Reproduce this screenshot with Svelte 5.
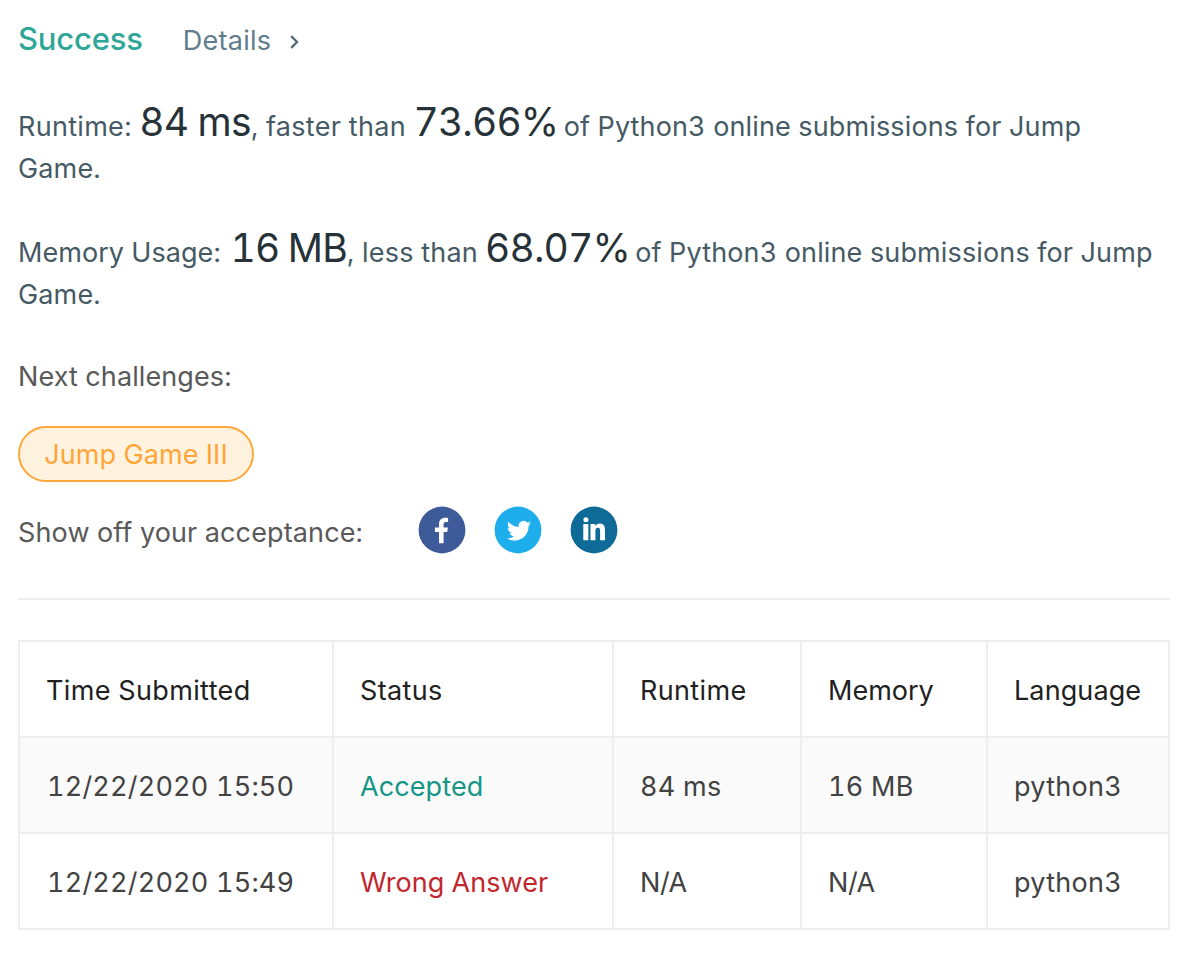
<script>
  const columns = ['Time Submitted', 'Status', 'Runtime', 'Memory', 'Language'];
  const submissions = [
    { time: '12/22/2020 15:50', status: 'Accepted', ok: true, runtime: '84 ms', memory: '16 MB', language: 'python3' },
    { time: '12/22/2020 15:49', status: 'Wrong Answer', ok: false, runtime: 'N/A', memory: 'N/A', language: 'python3' }
  ];
</script>

<main>
  <header>
    <span class="success">Success</span>
    <a class="details">
      <span>Details</span>
      <svg width="12" height="16" viewBox="0 0 12 16"><path d="M2.200 2.200 8 8l-5.800 5.800" /></svg>
    </a>
  </header>

  <p class="metric">
    <span class="label-run">Runtime:{' '}</span><span class="big ms">84 ms</span><span class="mid">, faster than{' '}</span><span class="big pct">73.66%</span><span class="tail">{' '}of Python3 online submissions for Jump Game.</span>
  </p>
  <p class="metric">
    <span class="label-mem">Memory Usage:{' '}</span><span class="big mb">16 MB</span><span class="mid-mem">, less than{' '}</span><span class="big pct-mem">68.07%</span><span class="tail">{' '}of Python3 online submissions for Jump Game.</span>
  </p>

  <div class="next">Next challenges:</div>
  <a class="pill"><span>Jump Game III</span></a>

  <div class="share">
    <span class="share-label">Show off your acceptance:</span>
    <div class="icons">
      <svg viewBox="0 0 48 48">
        <circle cx="24" cy="24" r="23.400" fill="#3d5b98" />
        <path fill="#fff" d="M21 37.200V26h-4.100v-4.500H21v-3.200c0-4.300 2.400-6.500 6.300-6.500 1.300 0 2.200.1 2.800.2v4.100h-2.200c-1.800 0-2.300.9-2.300 2.300v3.100h4.300l-.6 4.500h-3.700v11.200z" />
      </svg>
      <svg viewBox="0 0 48 48">
        <circle cx="24" cy="24" r="23.400" fill="#1eaeec" />
        <g transform="translate(12.800 12.600) scale(1.010)">
          <path fill="#fff" d="M23.950 4.570a10 10 0 0 1-2.820.77 4.960 4.960 0 0 0 2.160-2.720c-.95.56-2 .96-3.130 1.190a4.920 4.920 0 0 0-8.380 4.480C7.690 8.100 4.070 6.130 1.640 3.160a4.920 4.920 0 0 0 1.520 6.570 4.900 4.900 0 0 1-2.230-.61v.06c0 2.390 1.700 4.380 3.950 4.830a5 5 0 0 1-2.210.08 4.940 4.940 0 0 0 4.600 3.420A9.870 9.870 0 0 1 0 19.540a13.990 13.990 0 0 0 7.550 2.210c9.050 0 14-7.500 14-13.980 0-.21 0-.42-.02-.63a9.940 9.940 0 0 0 2.420-2.570z" />
        </g>
      </svg>
      <svg viewBox="0 0 48 48">
        <circle cx="24" cy="24" r="23.400" fill="#0e6b98" />
        <g fill="#fff">
          <circle cx="15.900" cy="13.700" r="2.500" />
          <path d="M13.300 18h5V34.300h-5zM20.500 18h4.700v2.200c.9-1.600 2.600-2.600 4.600-2.600 4.300 0 5.200 2.900 5.200 6.900v9.800h-4.900v-8.700c0-2.200-.2-3.900-2.100-3.900-2.100 0-2.600 1.600-2.600 3.900v8.700h-4.900z" />
        </g>
      </svg>
    </div>
  </div>

  <hr />

  <table>
    <colgroup><col class="c1" /><col class="c2" /><col class="c3" /><col class="c4" /><col class="c5" /></colgroup>
    <thead>
      <tr>{#each columns as c}<th>{c}</th>{/each}</tr>
    </thead>
    <tbody>
      {#each submissions as s}
        <tr>
          <td class="time">{s.time}</td>
          <td class={s.ok ? 'accepted' : 'wrong'}>{s.status}</td>
          <td class:empty={s.runtime === 'N/A'}>{s.runtime}</td>
          <td class:empty={s.memory === 'N/A'}>{s.memory}</td>
          <td class="lang">{s.language}</td>
        </tr>
      {/each}
    </tbody>
  </table>
</main>

<style>
  :global(body) { background: #fff; }
  main {
    box-sizing: border-box;
    height: 956px;
    padding: 18px 18px 0;
    overflow: hidden;
    font: 400 27px/42px Inter, "Liberation Sans", sans-serif;
    font-variant-numeric: tabular-nums;
    color: #595959;
  }
  header { display: flex; align-items: baseline; height: 42px; margin-bottom: 46px; }
  .success { font-size: 31px; font-weight: 500; letter-spacing: -0.200px; color: #2fa698; }
  .details { display: flex; align-items: center; margin-left: 40.200px; letter-spacing: 0.250px; color: #607d8b; }
  .details svg { margin: 2px 0 0 17.800px; fill: none; stroke: #546e7a; stroke-width: 2.400; }
  .metric { margin: 0 0 42px; padding-right: 8px; height: 84px; color: #455a64; }
  .label-run { letter-spacing: 0.300px; }
  .label-mem { letter-spacing: 0.050px; }
  .mid { letter-spacing: 0.300px; }
  .mid-mem { letter-spacing: 0.230px; }
  .tail { letter-spacing: 0.140px; margin-left: -2px; }
  .big { font-size: 39px; line-height: 0; color: #263238; }
  .ms { letter-spacing: -0.700px; word-spacing: -0.700px; }
  .mb { margin-left: 2.500px; letter-spacing: -0.750px; word-spacing: -1.500px; }
  .pct { letter-spacing: -0.850px; }
  .pct-mem { margin-left: -0.500px; letter-spacing: -0.850px; }
  .next { margin-top: -2px; letter-spacing: 0.100px; }
  .pill {
    display: flex; align-items: center; justify-content: center;
    box-sizing: border-box; width: 236px; height: 56px; margin: 28px 0 24px; padding-top: 2px;
    border: 2px solid #ffa73a; border-radius: 28px; letter-spacing: 0.080px;
    background: #fff3e0; color: #ffa538;
  }
  .share { display: flex; height: 48px; }
  .share-label { width: 400px; padding-top: 6px; letter-spacing: 0.130px; }
  .icons { display: flex; gap: 28px; }
  .icons svg { width: 48px; height: 48px; }
  hr { height: 2px; margin: 44px 0 40px; border: 0; background: #eee; }
  table {
    width: 1152px; table-layout: fixed; border-spacing: 0;
    border: solid #eee; border-width: 2px 0 0 2px;
  }
  .c1 { width: 314px; } .c2 { width: 280px; } .c3 { width: 188px; } .c4 { width: 186px; } .c5 { width: 182px; }
  th, td {
    box-sizing: border-box; height: 96px; padding: 4px 0 0 26px;
    border: solid #eee; border-width: 0 2px 2px 0;
    font-weight: 400; text-align: left; white-space: nowrap; color: #424242;
  }
  th { color: #212121; letter-spacing: 0.350px; }
  th:nth-child(4) { letter-spacing: 0; }
  th:nth-child(5) { letter-spacing: 0.100px; }
  td { letter-spacing: 0.250px; }
  tbody tr:nth-child(odd) td { background: #fafafa; }
  td.time { padding-left: 27px; letter-spacing: 0.200px; }
  td.empty { letter-spacing: -0.400px; }
  td.lang { letter-spacing: 0.280px; }
  td.accepted { color: #159686; letter-spacing: 0.100px; }
  td.wrong { color: #c1272d; letter-spacing: 0.040px; }
</style>
